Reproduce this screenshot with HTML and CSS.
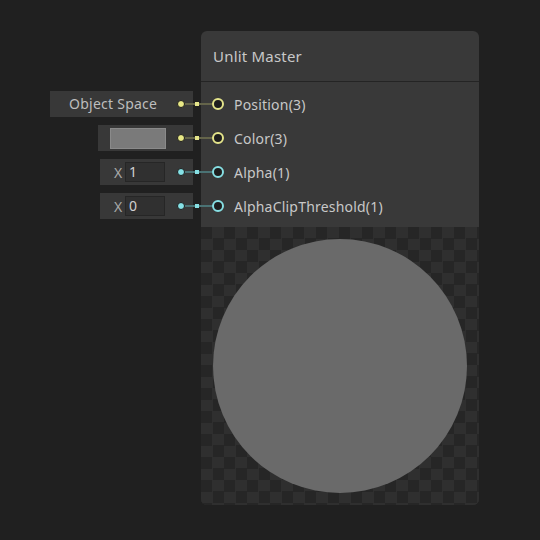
FILE: index.html
```html
<!DOCTYPE html>
<html>
<head>
<meta charset="utf-8">
<link rel="stylesheet" href="styles.css">
</head>
<body>
<div class="canvas">
  <div class="inputs">
    <div class="in-row">
      <div class="field field-space">
        <span class="field-text">Object Space</span>
        <span class="dot yellow"></span><span class="wire yellow-wire"></span>
      </div>
      <div class="link yellow-wire"><span class="knot yellow-knot"></span></div>
    </div>
    <div class="in-row">
      <div class="field field-color">
        <span class="swatch"></span>
        <span class="dot yellow"></span><span class="wire yellow-wire"></span>
      </div>
      <div class="link yellow-wire"><span class="knot yellow-knot"></span></div>
    </div>
    <div class="in-row">
      <div class="field field-num">
        <span class="axis">X</span><span class="num">1</span>
        <span class="dot cyan"></span><span class="wire cyan-wire"></span>
      </div>
      <div class="link cyan-wire"><span class="knot cyan-knot"></span></div>
    </div>
    <div class="in-row">
      <div class="field field-num">
        <span class="axis">X</span><span class="num">0</span>
        <span class="dot cyan"></span><span class="wire cyan-wire"></span>
      </div>
      <div class="link cyan-wire"><span class="knot cyan-knot"></span></div>
    </div>
  </div>
  <div class="node">
    <div class="node-title">Unlit Master</div>
    <div class="ports">
      <div class="port"><span class="pwire yellow-wire"></span><span class="ring ring-yellow"></span><span class="plabel">Position(3)</span></div>
      <div class="port"><span class="pwire yellow-wire"></span><span class="ring ring-yellow"></span><span class="plabel">Color(3)</span></div>
      <div class="port"><span class="pwire cyan-wire"></span><span class="ring ring-cyan"></span><span class="plabel">Alpha(1)</span></div>
      <div class="port"><span class="pwire cyan-wire"></span><span class="ring ring-cyan"></span><span class="plabel">AlphaClipThreshold(1)</span></div>
    </div>
    <div class="preview">
      <div class="sphere"></div>
    </div>
  </div>
</div>
</body>
</html>
```
FILE: styles.css
```css
html, body {
  margin: 0;
  padding: 0;
  background: #202020;
  height: 100%;
}
body {
  font-family: "Noto Sans", "Open Sans", sans-serif;
  color: #c4c4c4;
}
.canvas {
  display: flex;
  padding: 31px 0 0 50px;
}
.inputs {
  width: 151px;
  padding-top: 56px;
  display: flex;
  flex-direction: column;
  align-items: flex-end;
}
.in-row {
  height: 34px;
  display: flex;
  align-items: center;
}
.field {
  height: 26px;
  background: #383838;
  display: flex;
  align-items: center;
  box-sizing: border-box;
  font-size: 14px;
  letter-spacing: 0.25px;
  color: #bdbdbd;
}
.field-space {
  width: 143px;
  padding-left: 19px;
}
.field-color {
  width: 95px;
  padding-left: 12px;
}
.field-num {
  width: 93px;
  padding-left: 14px;
}
.field-text {
  margin-right: auto;
  line-height: 26px;
}
.swatch {
  width: 54px;
  height: 19px;
  background: #7a7a7a;
  border: 1px solid #8a8a8a;
  margin-right: auto;
}
.axis {
  width: 11px;
  color: #a8a8a8;
}
.num {
  width: 40px;
  height: 20px;
  box-sizing: border-box;
  line-height: 18px;
  padding-left: 3px;
  background: #303030;
  border: 1px solid #262626;
  margin-right: auto;
  color: #d0d0d0;
}
.dot {
  width: 6px;
  height: 6px;
  border-radius: 50%;
  border: 1px solid #1c1c1c;
  flex: none;
}
.dot.yellow { background: #e8e886; }
.dot.cyan { background: #86e2e6; }
.wire {
  width: 8px;
  height: 2px;
  flex: none;
}
.yellow-wire { background: #64644a; }
.cyan-wire { background: #4a7274; }
.link {
  width: 8px;
  height: 2px;
  display: flex;
  align-items: center;
  justify-content: center;
}
.knot {
  width: 4px;
  height: 4px;
}
.yellow-knot { background: #e4e48a; }
.cyan-knot { background: #86dfe3; }

.node {
  width: 278px;
  height: 474px;
  background: #393939;
  border-radius: 6px;
  display: flex;
  flex-direction: column;
  overflow: hidden;
}
.node-title {
  height: 50px;
  border-bottom: 1px solid #242424;
  display: flex;
  align-items: center;
  padding-left: 12px;
  font-size: 15px;
  letter-spacing: 0.2px;
  color: #c8c8c8;
}
.ports {
  padding: 5px 0 4px 0;
}
.port {
  height: 34px;
  display: flex;
  align-items: center;
}
.pwire {
  width: 11px;
  height: 2px;
}
.ring {
  width: 8px;
  height: 8px;
  border-radius: 50%;
  border: 2px solid;
  background: #1e1e1e;
  flex: none;
}
.ring-yellow { border-color: #e4e48a; }
.ring-cyan { border-color: #86dfe3; }
.plabel {
  margin-left: 10px;
  font-size: 14px;
  letter-spacing: 0.2px;
  color: #c8c8c8;
}
.preview {
  flex: 1;
  display: flex;
  align-items: center;
  justify-content: center;
  background-color: #262626;
  background-image: conic-gradient(#2f2f2f 25%, #262626 0 50%, #2f2f2f 0 75%, #262626 0);
  background-size: 23px 23px;
}
.sphere {
  width: 254px;
  height: 254px;
  border-radius: 50%;
  background: #6a6a6a;
}
```
